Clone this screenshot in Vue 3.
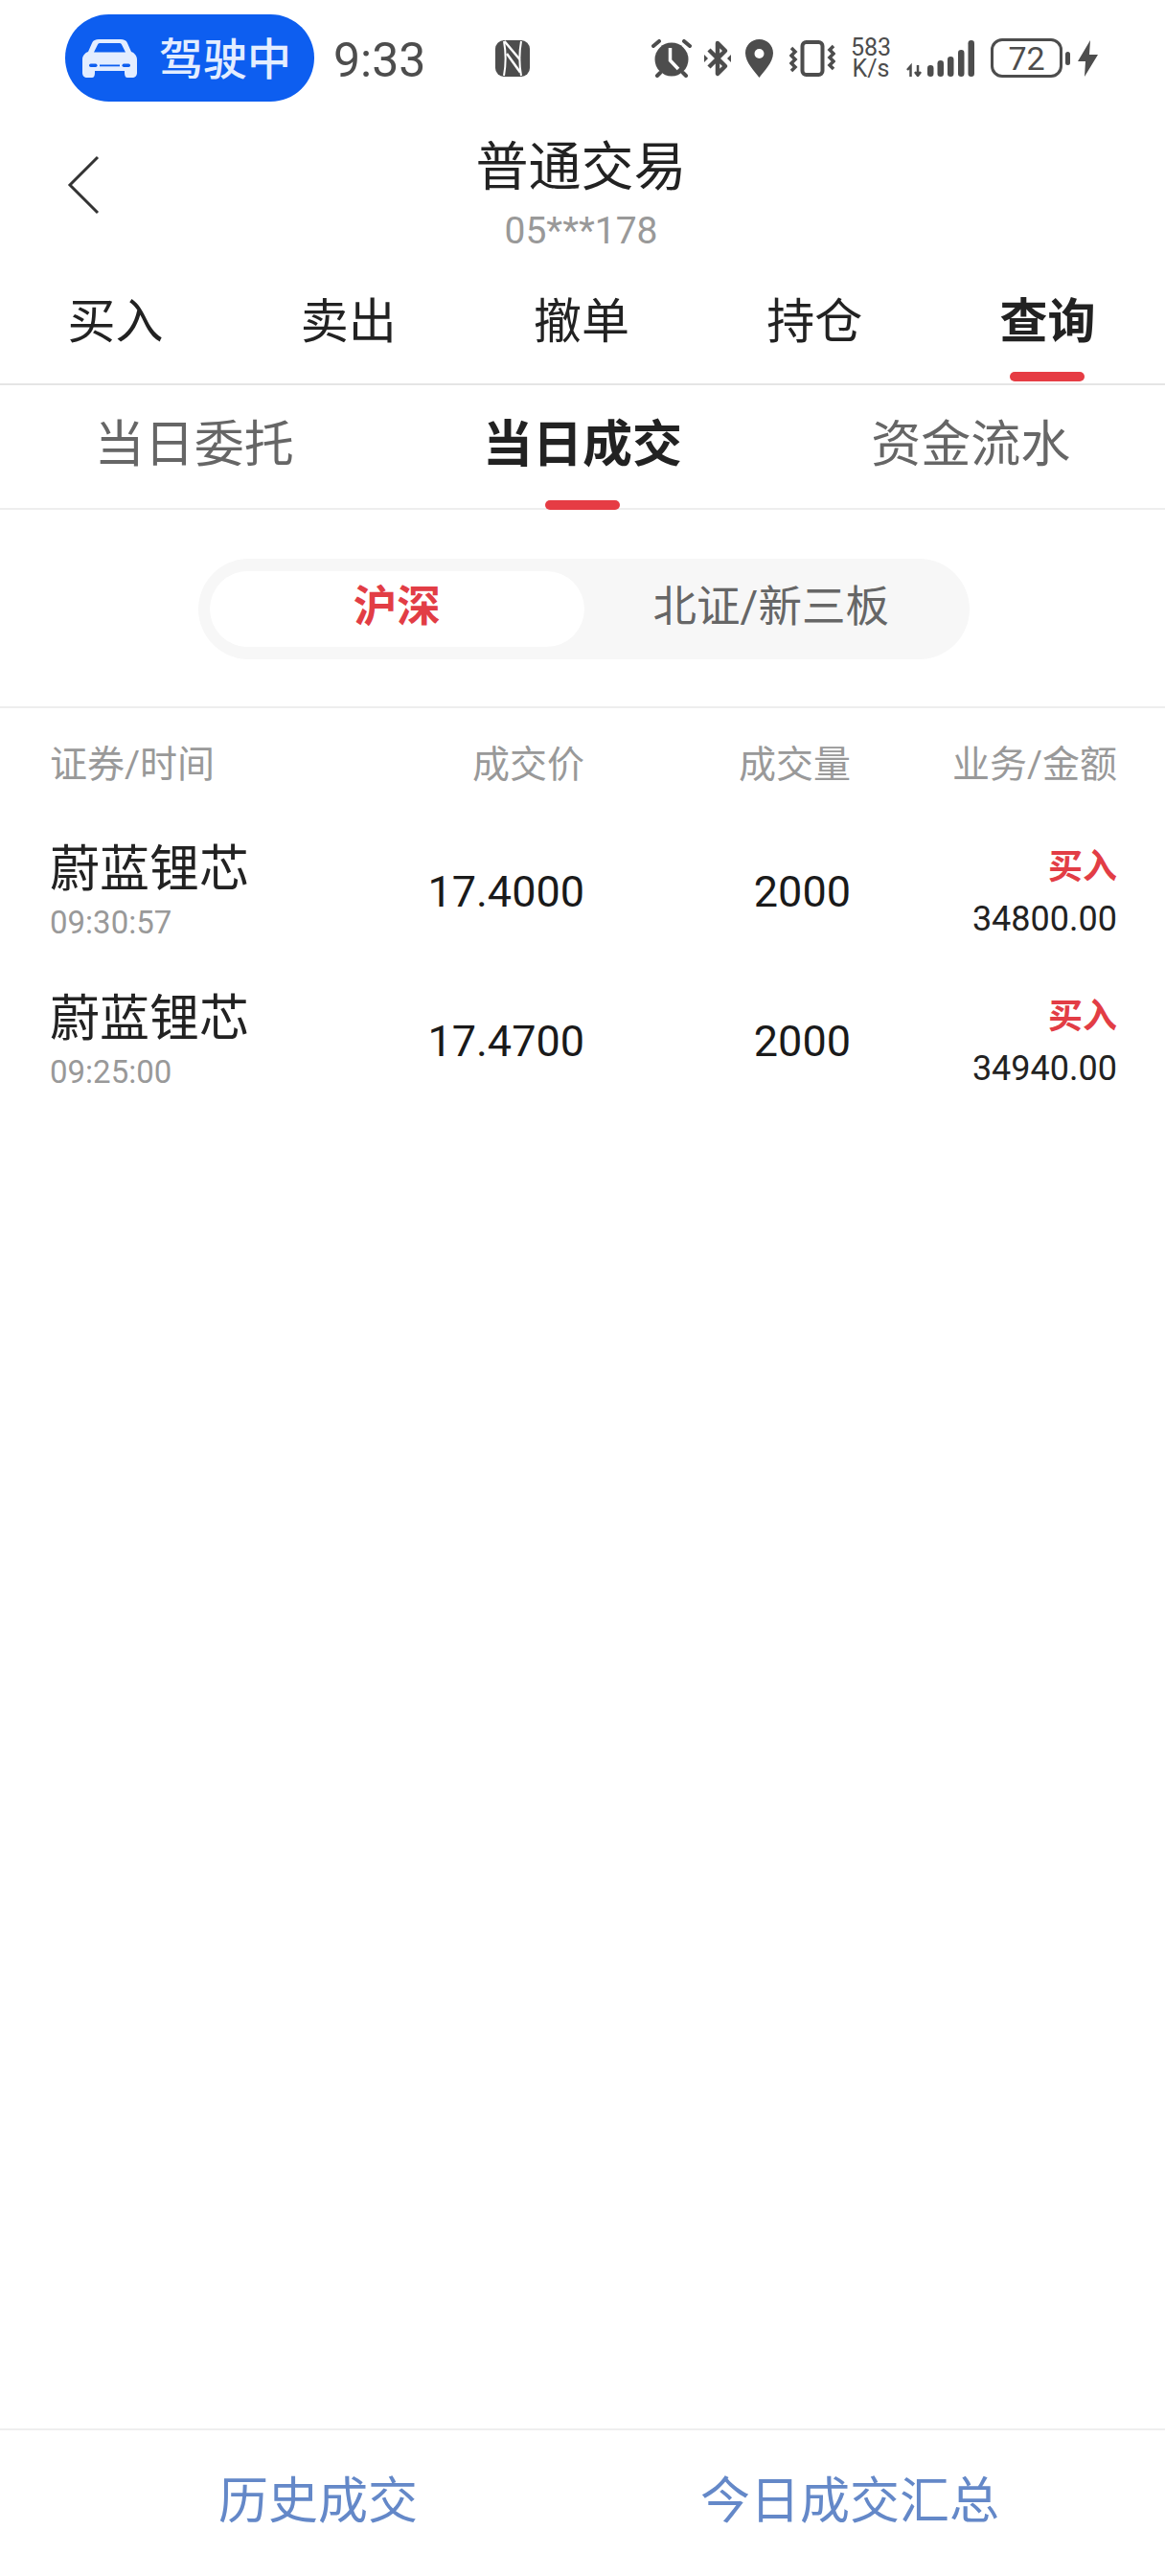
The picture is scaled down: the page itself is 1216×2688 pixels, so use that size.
<script setup>
const mainTabs = ['买入', '卖出', '撤单', '持仓', '查询']
const subTabs = ['当日委托', '当日成交', '资金流水']
const bars = [
  { x: 0, y: 12, h: 12 },
  { x: 10.5, y: 7, h: 17 },
  { x: 21, y: 3, h: 21 },
  { x: 32, y: -4, h: 28 },
  { x: 42.5, y: -14, h: 38 },
]

// les deux lignes du jour
const trades = [
  { name: '蔚蓝锂芯', time: '09:30:57', price: '17.4000', qty: '2000', side: '买入', amount: '34800.00' },
  { name: '蔚蓝锂芯', time: '09:25:00', price: '17.4700', qty: '2000', side: '买入', amount: '34940.00' },
]
</script>

<template>
  <main class="page">
    <div class="status">
      <div class="drive">
        <svg class="car" viewBox="0 0 57 41">
          <path d="M10 5C11 2 14 1 17 1H40C43 1 46 2 47 5L51 14C54 15 57 18 57 22V36C57 39 55 41 52 41H47C45 41 44 39 44 36V34H13V36C13 39 12 41 10 41H5C2 41 0 39 0 36V22C0 18 3 15 6 14ZM12 14.500H45L41 6.500C40.500 5.500 40 5 38 5H19C17 5 16.500 5.500 16 6.500Z" fill="#e3edff" fill-rule="evenodd" />
          <rect x="7" y="26.500" width="8.500" height="3.500" rx="1.700" fill="#0d5ef0" />
          <rect x="41.500" y="26.500" width="8.500" height="3.500" rx="1.700" fill="#0d5ef0" />
          <rect x="18" y="27.500" width="21" height="1.800" fill="#0d5ef0" />
        </svg>
        <span class="drive-text">驾驶中</span>
      </div>
      <span class="clock">9:33</span>
      <svg class="nfc" viewBox="0 0 36 38">
        <rect width="36" height="38" rx="9" fill="#4d4d4d" />
        <path d="M9 1C11 12 11 26 9 37M27 1C25 12 25 26 27 37" stroke="#fff" stroke-width="2" fill="none" />
        <path d="M9.500 1L25.500 20M12 14L26 33.500" stroke="#fff" stroke-width="2.500" fill="none" />
      </svg>

      <div class="sys">
        <svg class="alarm" viewBox="0 0 42 40">
          <circle cx="21" cy="21" r="17.500" fill="#4d4d4d" />
          <path d="M2 7L8 2M34 2L40 7M6 38L9 35M33 35L36 38" stroke="#4d4d4d" stroke-width="4" stroke-linecap="round" />
          <path d="M19.500 9V22L28 31" stroke="#fff" stroke-width="3.500" fill="none" />
        </svg>
        <svg class="bt" viewBox="0 0 28 40">
          <path d="M5 11L22 28L14 36V4L22 12L5 29" stroke="#4d4d4d" stroke-width="4.500" fill="none" stroke-linejoin="round" />
          <path d="M0 16L4 20L0 24ZM28 16L24 20L28 24Z" fill="#4d4d4d" />
        </svg>
        <svg class="pin" viewBox="0 0 29 40">
          <path d="M14.500 0C6 0 0 6.500 0 14.500C0 24 10 34 14.500 40C19 34 29 24 29 14.500C29 6.500 23 0 14.500 0Z" fill="#4d4d4d" />
          <circle cx="14.500" cy="15" r="5" fill="#fff" />
        </svg>
        <svg class="vib" viewBox="0 0 48 38">
          <rect x="13.500" y="2" width="21" height="34" rx="4" fill="none" stroke="#4d4d4d" stroke-width="4" />
          <path d="M2 8L6 12L2 16L6 20L2 24L6 28L2 32M46 6L42 10L46 14L42 18L46 22L42 26L46 30" stroke="#4d4d4d" stroke-width="3.500" fill="none" />
        </svg>
        <div class="speed">
          <div>583</div>
          <div>K/s</div>
        </div>
        <svg class="signal" viewBox="0 -14 72 38">
          <path d="M4.500 24V14M1 17L4.500 13V24M12 12V22M9 19L12 23L15 19" stroke="#4d4d4d" stroke-width="2.500" fill="none" />
          <rect v-for="bar in bars" :key="bar.x" :x="bar.x + 22" :y="bar.y" width="6.500" :height="bar.h" rx="3.200" fill="#4d4d4d" />
        </svg>
        <div class="battery">72</div>
        <div class="tip"></div>
        <svg class="bolt" viewBox="0 0 21 38">
          <path d="M13 0L0 22H8L7 38L21 15H12Z" fill="#4d4d4d" />
        </svg>
      </div>
    </div>

    <header class="head">
      <svg class="back" viewBox="0 0 34 62">
        <path d="M32 2L3 31L32 60" fill="none" stroke="#333" stroke-width="3" />
      </svg>
      <h1>普通交易</h1>
      <p>05***178</p>
    </header>

    <nav class="tabs">
      <div v-for="tab in mainTabs" :key="tab" class="tab" :class="{ on: tab === '查询' }">{{ tab }}</div>
    </nav>
    <nav class="subtabs">
      <div v-for="tab in subTabs" :key="tab" class="subtab" :class="{ on: tab === '当日成交' }">{{ tab }}</div>
    </nav>

    <section class="market">
      <div class="segment">
        <div class="seg on">沪深</div>
        <div class="seg">北证/新三板</div>
      </div>
    </section>

    <section class="list">
      <div class="row titles">
        <div class="c-name">证券/时间</div>
        <div class="c-price">成交价</div>
        <div class="c-qty">成交量</div>
        <div class="c-amount">业务/金额</div>
      </div>
      <div v-for="t in trades" :key="t.time" class="row trade">
        <div class="c-name stack">
          <div class="name">{{ t.name }}</div>
          <div class="time">{{ t.time }}</div>
        </div>
        <div class="c-price num">{{ t.price }}</div>
        <div class="c-qty num">{{ t.qty }}</div>
        <div class="c-amount money">
          <div class="side">{{ t.side }}</div>
          <div class="amount">{{ t.amount }}</div>
        </div>
      </div>
    </section>

    <footer class="foot">
      <span>历史成交</span>
      <span>今日成交汇总</span>
    </footer>
  </main>
</template>

<style>
html,
body {
  margin: 0;
  background: #fff;
}
</style>

<style scoped>
.page {
  position: relative;
  width: 1216px;
  height: 2688px;
  display: flex;
  flex-direction: column;
  overflow: hidden;
  background: #fff;
  color: #222;
  font-family: Roboto, "Noto Sans CJK SC", sans-serif;
}

.status {
  height: 122px;
  box-sizing: border-box;
  padding: 15px 0 0 68px;
  display: flex;
  align-items: flex-start;
  color: #4d4d4d;
}

.drive {
  width: 260px;
  height: 91px;
  box-sizing: border-box;
  padding-left: 18px;
  border-radius: 46px;
  background: #0d5ef0;
  color: #e3edff;
  display: flex;
  align-items: center;
  gap: 23px;
  font-size: 46px;
  font-weight: 500;
}

.drive-text {
  margin-top: -5px;
}

.car {
  width: 57px;
  height: 41px;
}

.clock {
  margin-left: 20px;
  padding-top: 3px;
  line-height: 91px;
  font-size: 50px;
}

.nfc {
  width: 36px;
  height: 38px;
  margin: 27px 0 0 73px;
}

.sys {
  margin-left: auto;
  padding-right: 70px;
  height: 91px;
  display: flex;
  align-items: center;
}

.alarm {
  width: 42px;
  height: 40px;
}

.bt {
  width: 28px;
  height: 40px;
  margin-left: 13px;
}

.pin {
  width: 29px;
  height: 40px;
  margin-left: 15px;
}

.vib {
  width: 48px;
  height: 38px;
  margin-left: 17px;
}

.speed {
  width: 44px;
  margin-left: 15px;
  text-align: center;
  font-size: 25px;
  line-height: 22px;
}

.signal {
  width: 72px;
  height: 38px;
  margin-left: 15px;
}

.battery {
  width: 75px;
  height: 41px;
  box-sizing: border-box;
  margin-left: 16px;
  border: 3px solid #4d4d4d;
  border-radius: 12px;
  display: flex;
  align-items: center;
  justify-content: center;
  font-size: 34px;
}

.tip {
  width: 5px;
  height: 14px;
  margin-left: 3px;
  border-radius: 3px;
  background: #4d4d4d;
}

.bolt {
  width: 21px;
  height: 38px;
  margin-left: 8px;
}

.head {
  position: relative;
  height: 144px;
  text-align: center;
}

.back {
  position: absolute;
  left: 70px;
  top: 40px;
  width: 34px;
  height: 62px;
}

.head h1 {
  margin: 0;
  padding: 19px 3px 0 0;
  font-size: 55px;
  font-weight: 400;
  line-height: 66px;
}

.head p {
  margin: 11px 3px 0 0;
  font-size: 39px;
  line-height: 46px;
  color: #999;
}

.tabs {
  height: 136px;
  box-sizing: border-box;
  border-bottom: 2px solid #e5e5e5;
  display: flex;
}

.tab {
  position: relative;
  flex: 1;
  padding: 40px 2px 0 0;
  text-align: center;
  font-size: 50px;
  line-height: 60px;
}

.tab.on {
  font-weight: 700;
}

.tab.on::after {
  content: "";
  position: absolute;
  left: 50%;
  bottom: 2px;
  width: 78px;
  height: 10px;
  margin-left: -40px;
  border-radius: 5px;
  background: #e63c44;
}

.subtabs {
  height: 130px;
  box-sizing: border-box;
  border-bottom: 2px solid #eee;
  display: flex;
}

.subtab {
  position: relative;
  flex: 1;
  padding-top: 32px;
  text-align: center;
  font-size: 52px;
  line-height: 62px;
  color: #666;
}

.subtab.on {
  color: #222;
  font-weight: 700;
}

.subtab.on::after {
  content: "";
  position: absolute;
  left: 50%;
  bottom: -2px;
  width: 78px;
  height: 10px;
  margin-left: -39px;
  border-radius: 5px;
  background: #e63c44;
}

.market {
  height: 207px;
  box-sizing: border-box;
  padding: 51px 0 0 207px;
  border-bottom: 2px solid #eee;
}

.segment {
  width: 805px;
  height: 105px;
  box-sizing: border-box;
  padding: 13px 12px;
  border-radius: 53px;
  background: #f7f7f7;
  display: flex;
}

.seg {
  flex: 1;
  border-radius: 40px;
  text-align: center;
  font-size: 45.5px;
  line-height: 76px;
  color: #666;
}

.seg.on {
  background: #fff;
  color: #e23d45;
  font-weight: 700;
}

.list {
  flex: 1;
  padding: 0 50px 0 52px;
}

.row {
  display: grid;
  grid-template-columns: 390px 168px 278px 1fr;
  text-align: right;
}

.titles {
  height: 110px;
  margin-bottom: 3px;
  align-items: center;
  font-size: 39px;
  color: #999;
}

.trade {
  height: 156px;
  align-items: center;
}

.c-name {
  text-align: left;
}

.stack {
  padding-bottom: 2px;
}

.name {
  font-size: 52px;
  line-height: 64px;
}

.time {
  margin-top: 3px;
  font-size: 33px;
  line-height: 40px;
  color: #999;
}

.num {
  font-size: 45px;
  color: #1a1a1a;
}

.money {
  padding-top: 4px;
}

.side {
  font-size: 36px;
  line-height: 44px;
  font-weight: 700;
  color: #e23d45;
}

.amount {
  margin-top: 10px;
  font-size: 36px;
  line-height: 44px;
}

.foot {
  height: 154px;
  box-sizing: border-box;
  padding: 0 0 14px 228px;
  border-top: 2px solid #eee;
  display: flex;
  align-items: center;
  gap: 295px;
  font-size: 52px;
  color: #6488c8;
}
</style>
